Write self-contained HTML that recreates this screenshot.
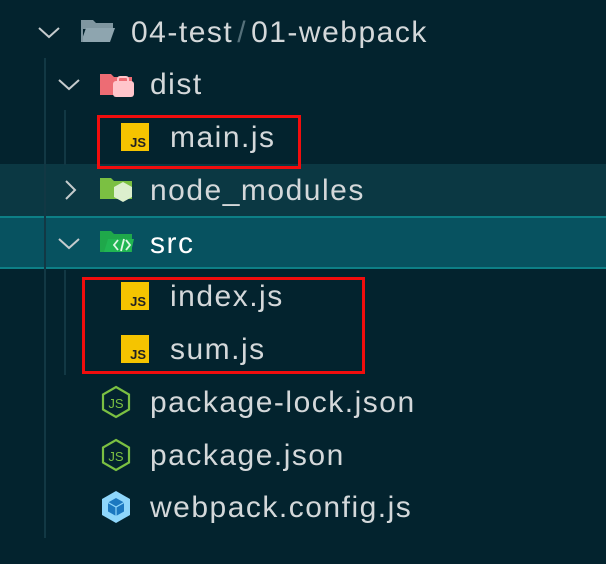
<!DOCTYPE html>
<html><head><style>
body{margin:0;width:606px;height:564px;background:#03232e;font-family:"Liberation Sans",sans-serif;color:#d4d8da;position:relative;overflow:hidden}
.r{position:absolute;left:0;width:606px;height:53px}
.t{position:absolute;font-size:30px;letter-spacing:1.5px;line-height:53px;top:0;white-space:nowrap}
.js{position:absolute;width:28px;height:28px;background:#f5c400;top:12px}
.js span{position:absolute;right:3px;bottom:1px;font:bold 13px "Liberation Sans",sans-serif;color:#222}
.box{position:absolute;border:3px solid #f10d0d;box-sizing:border-box}
svg{position:absolute}
</style></head><body>
<div style="position:absolute;left:0;top:164px;width:606px;height:52px;background:#0b3843"></div>
<div style="position:absolute;left:0;top:216px;width:606px;height:53px;background:#075260;border-top:2px solid #0d7f86;border-bottom:2px solid #0d7f86;box-sizing:border-box"></div>
<div style="position:absolute;left:44px;top:58px;width:2px;height:480px;background:#123844"></div>
<div style="position:absolute;left:64px;top:110px;width:2px;height:55px;background:#123844"></div>
<div style="position:absolute;left:64px;top:270px;width:2px;height:105px;background:#123844"></div>

<div class="r" style="top:6px">
<svg width="30" height="53" style="left:36px"><path d="M3 22 L13 31 L23 22" fill="none" stroke="#c5cbcd" stroke-width="2"/></svg>
<svg width="36" height="53" style="left:80px"><path d="M1 14 h12 l3 3 h17 v6 H1z" fill="#7f96a0"/><path d="M1 36 L6 22 H35 L30 36z" fill="#8ea5af"/><path d="M1 14 v22 h2 v-22z" fill="#7f96a0"/></svg>
<div class="t" style="left:131px">04-test<span style="color:#55707a;margin:0 4px">/</span>01-webpack</div>
</div>
<div class="r" style="top:58px">
<svg width="30" height="53" style="left:56px"><path d="M3 22 L13 31 L23 22" fill="none" stroke="#c5cbcd" stroke-width="2"/></svg>
<svg width="36" height="53" style="left:99px"><path d="M1 16 h11 l3 3 h18 v18 H1z" fill="#ed6c74"/><rect x="14" y="23" width="21" height="16" rx="3" fill="#ffc5cb"/><rect x="19" y="19" width="10" height="6" rx="2" fill="none" stroke="#ffc5cb" stroke-width="2"/></svg>
<div class="t" style="left:150px">dist</div>
</div>
<div class="r" style="top:111px">
<div class="js" style="left:121px"><span>JS</span></div>
<div class="t" style="left:170px">main.js</div>
</div>
<div class="r" style="top:164px">
<svg width="30" height="53" style="left:60px"><path d="M6 17 L15 26 L6 35" fill="none" stroke="#c5cbcd" stroke-width="2"/></svg>
<svg width="36" height="53" style="left:99px"><path d="M1 14 h11 l3 3 h18 v18 H1z" fill="#7bc042"/><path d="M24 18 l9 5 v10 l-9 5 l-9 -5 v-10z" fill="#dcefcd"/></svg>
<div class="t" style="left:150px">node_modules</div>
</div>
<div class="r" style="top:217px">
<svg width="30" height="53" style="left:56px"><path d="M3 22 L13 31 L23 22" fill="none" stroke="#c5cbcd" stroke-width="2"/></svg>
<svg width="36" height="53" style="left:99px"><path d="M1 14 h11 l3 3 h18 v18 H1z" fill="#1fa84a"/><path d="M5 35 L9 22 H35 L32 35z" fill="#21b552"/><path d="M19 23 l-4 5 l4 5 M27 23 l4 5 l-4 5 M25 22 l-3 12" fill="none" stroke="#dff7e6" stroke-width="1.8"/></svg>
<div class="t" style="left:150px;color:#fff">src</div>
</div>
<div class="r" style="top:270px"><div class="js" style="left:121px"><span>JS</span></div><div class="t" style="left:170px">index.js</div></div>
<div class="r" style="top:323px"><div class="js" style="left:121px"><span>JS</span></div><div class="t" style="left:170px">sum.js</div></div>
<div class="r" style="top:376px">
<svg width="32" height="53" style="left:101px"><path d="M15 11 l13 7.5 v15 l-13 7.5 l-13 -7.5 v-15z" fill="none" stroke="#7bc042" stroke-width="2.2"/><text x="15" y="32" text-anchor="middle" font-family="Liberation Sans" font-size="13" fill="#7bc042">JS</text></svg>
<div class="t" style="left:150px">package-lock.json</div>
</div>
<div class="r" style="top:429px">
<svg width="32" height="53" style="left:101px"><path d="M15 11 l13 7.5 v15 l-13 7.5 l-13 -7.5 v-15z" fill="none" stroke="#7bc042" stroke-width="2.2"/><text x="15" y="32" text-anchor="middle" font-family="Liberation Sans" font-size="13" fill="#7bc042">JS</text></svg>
<div class="t" style="left:150px">package.json</div>
</div>
<div class="r" style="top:481px">
<svg width="32" height="53" style="left:101px"><path d="M15 10 l14 8 v16 l-14 8 l-14 -8 v-16z" fill="#8ed6fb"/><path d="M15 17 l8 4.5 v9 l-8 4.5 l-8 -4.5 v-9z" fill="#1c78c0"/><path d="M7 21.5 l8 4.5 l8 -4.5 M15 26 v9" stroke="#8ed6fb" stroke-width="1.2" fill="none"/></svg>
<div class="t" style="left:150px">webpack.config.js</div>
</div>

<div class="box" style="left:97px;top:115px;width:204px;height:54px"></div>
<div class="box" style="left:82px;top:277px;width:283px;height:97px"></div>
</body></html>
